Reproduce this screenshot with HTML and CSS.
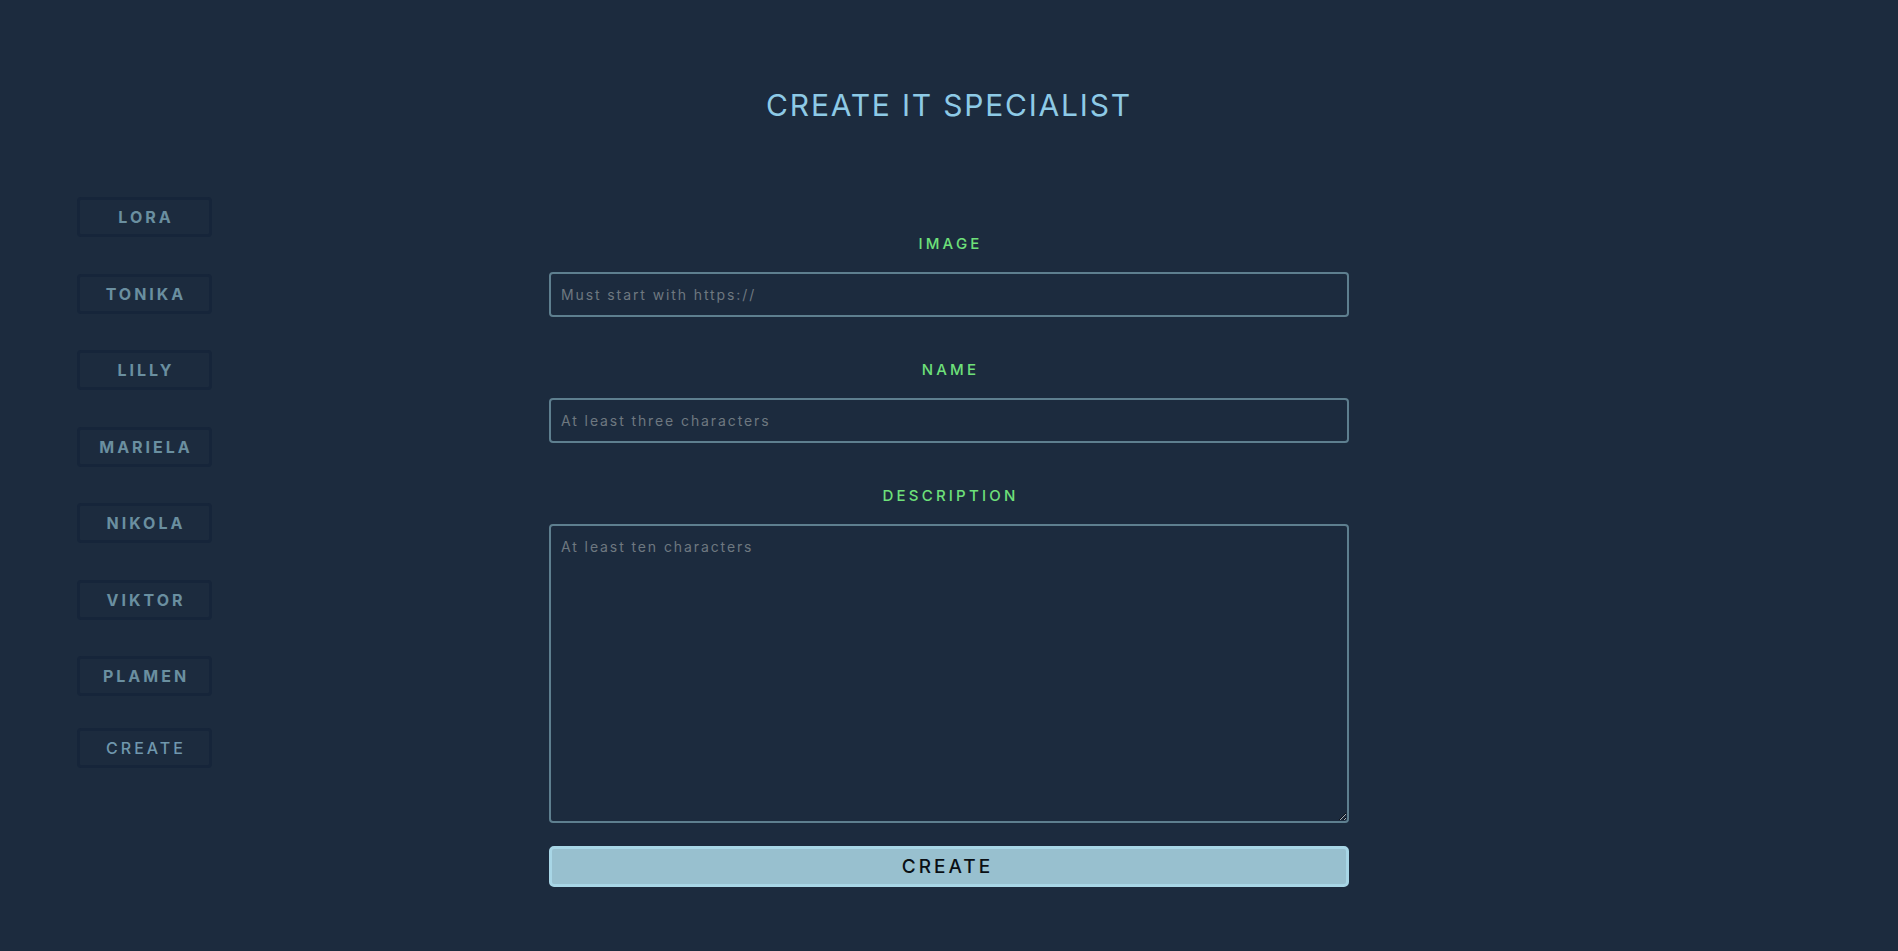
FILE: index.html
```html
<!DOCTYPE html>
<html lang="en">
<head>
<meta charset="utf-8">
<title>Create IT Specialist</title>
<link rel="stylesheet" href="styles.css">
</head>
<body>
<h1 class="title">CREATE IT SPECIALIST</h1>
<div class="layout">
  <nav class="sidebar">
    <a class="nav-btn" href="#">LORA</a>
    <a class="nav-btn" href="#">TONIKA</a>
    <a class="nav-btn" href="#">LILLY</a>
    <a class="nav-btn" href="#">MARIELA</a>
    <a class="nav-btn" href="#">NIKOLA</a>
    <a class="nav-btn" href="#">VIKTOR</a>
    <a class="nav-btn" href="#">PLAMEN</a>
    <a class="nav-btn nav-create" href="#">CREATE</a>
  </nav>
  <form class="form">
    <label class="label" for="image">IMAGE</label>
    <input class="field" id="image" type="text" placeholder="Must start with https://">
    <label class="label" for="name">NAME</label>
    <input class="field" id="name" type="text" placeholder="At least three characters">
    <label class="label" for="desc">DESCRIPTION</label>
    <textarea class="field area" id="desc" placeholder="At least ten characters"></textarea>
    <button class="submit" type="submit">CREATE</button>
  </form>
  <div></div>
</div>
</body>
</html>
```
FILE: styles.css
```css
* { box-sizing: border-box; }
html, body {
  margin: 0;
  background: #1c2b3e;
  height: 100%;
}
body {
  font-family: Inter, "DejaVu Sans", sans-serif;
}
.title {
  margin: 0;
  padding-top: 87px;
  text-align: center;
  font-weight: 400;
  font-size: 30px;
  line-height: 36px;
  letter-spacing: 1.8px;
  color: #8ecae6;
}
.layout {
  display: grid;
  grid-template-columns: 1fr 800px 1fr;
  margin-top: 74px;
}
.sidebar {
  display: flex;
  flex-direction: column;
  align-items: flex-start;
  padding-left: 77px;
  gap: 36.5px;
}
.nav-btn {
  display: flex;
  align-items: center;
  justify-content: center;
  width: 135px;
  height: 40px;
  border: 3px solid #16253a;
  border-radius: 4px;
  color: #6a8fa0;
  font-weight: 700;
  font-size: 16px;
  letter-spacing: 3px;
  padding-left: 3px;
  text-decoration: none;
}
.nav-create {
  margin-top: -4.5px;
  font-weight: 500;
  color: #7097ad;
}
.form {
  display: flex;
  flex-direction: column;
  padding-top: 37px;
}
.label {
  text-align: center;
  color: #6ee07a;
  font-weight: 500;
  font-size: 15px;
  letter-spacing: 3.2px;
  padding-left: 3px;
  line-height: 20px;
  margin-bottom: 18px;
}
.field {
  width: 100%;
  height: 45px;
  background: transparent;
  border: 2px solid #5e7f8f;
  border-radius: 4px;
  padding: 0 10px;
  font-family: Inter, "DejaVu Sans", sans-serif;
  font-size: 14px;
  letter-spacing: 1.9px;
  color: #c8d3da;
  margin-bottom: 43px;
}
.field::placeholder {
  color: #6e7880;
}
.area {
  height: 299px;
  padding: 12px 10px;
  margin-bottom: 23px;
  resize: vertical;
}
.submit {
  height: 41px;
  background: #98c0cf;
  border: 3px solid #a8d6e6;
  border-radius: 5px;
  font-family: Inter, "DejaVu Sans", sans-serif;
  font-weight: 500;
  font-size: 19px;
  letter-spacing: 3px;
  padding-left: 3px;
  color: #0a0f14;
  cursor: pointer;
}
```
